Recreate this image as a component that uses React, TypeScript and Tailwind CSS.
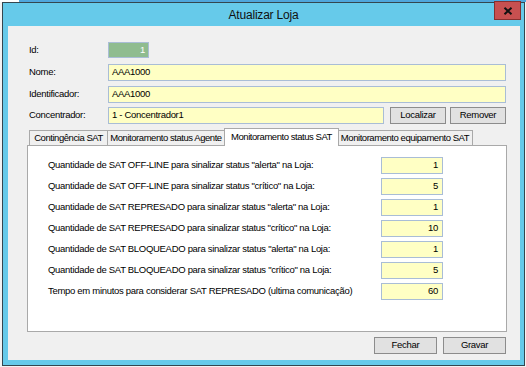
const rows: [string, string][] = [
  ['Quantidade de SAT OFF-LINE para sinalizar status "alerta" na Loja:', "1"],
  ['Quantidade de SAT OFF-LINE para sinalizar status "crítico" na Loja:', "5"],
  ['Quantidade de SAT REPRESADO para sinalizar status "alerta" na Loja:', "1"],
  ['Quantidade de SAT REPRESADO para sinalizar status "crítico" na Loja:', "10"],
  ['Quantidade de SAT BLOQUEADO para sinalizar status "alerta" na Loja:', "1"],
  ['Quantidade de SAT BLOQUEADO para sinalizar status "crítico" na Loja:', "5"],
  ["Tempo em minutos para considerar SAT REPRESADO (ultima comunicação)", "60"],
];

function Field({ value, className = "" }: { value: string; className?: string }) {
  return (
    <div
      className={`h-[17px] flex items-center px-[3px] border border-[#a9bdd6] bg-[#ffffc4] ${className}`}
    >
      {value}
    </div>
  );
}

function Button({ label, className = "" }: { label: string; className?: string }) {
  return (
    <div
      className={`h-[17px] flex items-center justify-center border border-[#8c8c8c] bg-[#e1e1e1] ${className}`}
    >
      {label}
    </div>
  );
}

export default function App() {
  return (
    <div
      className="w-[526px] h-[367px] bg-[#f3f3f3] flex flex-col overflow-hidden text-black text-[9.5px] tracking-[-0.3px]"
      style={{ fontFamily: '"Liberation Sans", Arial, sans-serif' }}
    >
      {/* window behind */}
      <div className="h-[2px] flex">
        <div className="w-[19px] bg-white" />
        <div className="flex-1 bg-[#4fa6dc]" />
      </div>

      <div className="pl-[2px]">
        <div className="w-[523px] h-[364px] border border-[#34464f] bg-[#66caea] flex flex-col">
          {/* title bar */}
          <div className="relative h-[23px] flex items-center justify-center">
            <span className="text-[12px] tracking-[-0.2px] text-[#111]">Atualizar Loja</span>
            <div className="absolute top-[-2px] right-[3px] w-[27px] h-[19px] bg-[#c75050] border border-[#86302f] flex items-center justify-center">
              <svg width="10" height="8" viewBox="0 0 10 8">
                <path d="M1.5 0.8 L8.5 7.2 M8.5 0.8 L1.5 7.2" stroke="#111" strokeWidth="2" />
              </svg>
            </div>
          </div>

          {/* client area */}
          <div className="ml-[5px] w-[512px] h-[334px] bg-[#f0f0f0] flex flex-col">
            <div className="mt-[16px] h-[16px] flex items-center pl-[21px]">
              <span className="w-[79px]">Id:</span>
              <div className="w-[41px] h-[16px] flex items-center justify-end px-[3px] border border-[#a9bdd6] bg-[#8fbc8f] text-white">
                1
              </div>
            </div>

            <div className="mt-[6px] flex items-center pl-[21px] pr-[14px]">
              <span className="w-[79px]">Nome:</span>
              <Field value="AAA1000" className="flex-1" />
            </div>

            <div className="mt-[5px] flex items-center pl-[21px] pr-[14px]">
              <span className="w-[79px]">Identificador:</span>
              <Field value="AAA1000" className="flex-1" />
            </div>

            <div className="mt-[4px] flex items-center pl-[21px] pr-[14px]">
              <span className="w-[79px]">Concentrador:</span>
              <Field value="1 - Concentrador1" className="flex-1" />
              <Button label="Localizar" className="ml-[6px] w-[56px]" />
              <Button label="Remover" className="ml-[4px] w-[56px]" />
            </div>

            {/* tabs */}
            <div className="mt-[4px] ml-[19px] mr-[13px] flex flex-col">
              <div className="h-[17px] flex items-end pl-[2px] tracking-[-0.45px] whitespace-nowrap">
                <div className="w-[79px] h-[15px] flex items-center justify-center border border-b-0 border-[#a9a9a9] bg-[#f0f0f0]">
                  Contingência SAT
                </div>
                <div className="-ml-px w-[118px] h-[15px] flex items-center justify-center border border-b-0 border-[#a9a9a9] bg-[#f0f0f0]">
                  Monitoramento status Agente
                </div>
                <div className="relative z-10 -ml-px -mb-px w-[115px] h-[18px] flex items-center justify-center border border-b-0 border-[#a9a9a9] bg-white">
                  Monitoramento status SAT
                </div>
                <div className="-ml-[2px] w-[136px] h-[15px] flex items-center justify-center border border-b-0 border-[#a9a9a9] bg-[#f0f0f0]">
                  Monitoramento equipamento SAT
                </div>
              </div>

              <div className="h-[187px] border border-[#a9a9a9] bg-white pt-[11px] pl-[20px] flex flex-col gap-[4px]">
                {rows.map(([label, value]) => (
                  <div key={label} className="h-[17px] flex items-center">
                    <span className="w-[333px] whitespace-nowrap">{label}</span>
                    <Field value={value} className="w-[62px] justify-end pr-[4px]" />
                  </div>
                ))}
              </div>
            </div>

            <div className="mt-[5px] flex justify-end gap-[6px] pr-[14px]">
              <Button label="Fechar" className="w-[63px]" />
              <Button label="Gravar" className="w-[63px]" />
            </div>
          </div>
        </div>
      </div>
    </div>
  );
}
